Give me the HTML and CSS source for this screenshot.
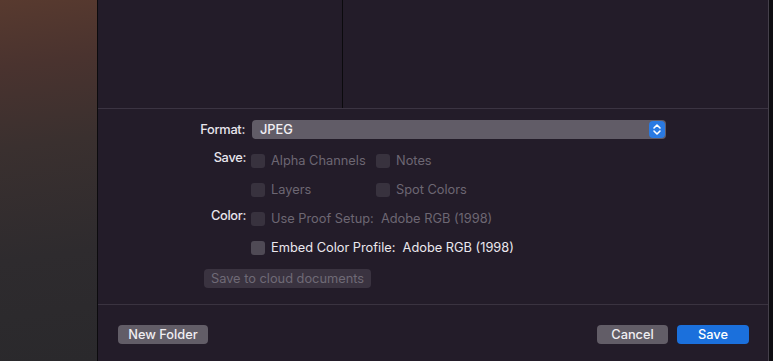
FILE: index.html
```html
<!DOCTYPE html>
<html>
<head>
<meta charset="utf-8">
<link rel="stylesheet" href="styles.css">
</head>
<body>
<div class="screen">
  <div class="desktop"></div>
  <div class="dialog">
    <div class="browser">
      <div class="col col-left"></div>
      <div class="col col-right"></div>
    </div>
    <div class="options">
      <div class="row row-format">
        <div class="label">Format:</div>
        <div class="popup">
          <span class="popup-text">JPEG</span>
          <span class="stepper">
            <svg width="16" height="17" viewBox="0 0 16 17"><path d="M5 7 L8 4 L11 7" fill="none" stroke="#fff" stroke-width="1.6" stroke-linecap="round" stroke-linejoin="round"/><path d="M5 10 L8 13 L11 10" fill="none" stroke="#fff" stroke-width="1.6" stroke-linecap="round" stroke-linejoin="round"/></svg>
          </span>
        </div>
      </div>
      <div class="row row-check">
        <div class="label">Save:</div>
        <div class="checks">
          <label class="check disabled"><span class="box"></span>Alpha Channels</label>
          <label class="check disabled"><span class="box"></span>Notes</label>
        </div>
      </div>
      <div class="row row-check">
        <div class="label"></div>
        <div class="checks">
          <label class="check disabled"><span class="box"></span>Layers</label>
          <label class="check disabled"><span class="box"></span>Spot Colors</label>
        </div>
      </div>
      <div class="row row-check">
        <div class="label">Color:</div>
        <div class="checks">
          <label class="check disabled wide"><span class="box"></span>Use Proof Setup:&nbsp; Adobe RGB (1998)</label>
        </div>
      </div>
      <div class="row row-check">
        <div class="label"></div>
        <div class="checks">
          <label class="check wide"><span class="box"></span>Embed Color Profile:&nbsp; Adobe RGB (1998)</label>
        </div>
      </div>
      <div class="cloud-row">
        <button class="btn btn-disabled">Save to cloud documents</button>
      </div>
    </div>
    <div class="footer">
      <button class="btn btn-gray">New Folder</button>
      <div class="spacer"></div>
      <button class="btn btn-gray btn-cancel">Cancel</button>
      <button class="btn btn-blue">Save</button>
    </div>
  </div>
  <div class="edge"></div>
</div>
</body>
</html>
```
FILE: styles.css
```css
* { box-sizing: border-box; }
html, body {
  margin: 0;
  padding: 0;
  width: 773px;
  height: 361px;
  overflow: hidden;
  background: #0d0c10;
  font-family: Inter, "Noto Sans", "Liberation Sans", sans-serif;
  font-size: 12.8px;
  color: #dedbe2;
}
.screen {
  display: flex;
  width: 773px;
  height: 361px;
}
.desktop {
  flex: none;
  width: 98px;
  background: linear-gradient(172deg, #583a2f 0%, #4a332f 18%, #3a302f 40%, #2e2b2e 70%, #2a292c 100%);
  border-right: 1px solid #0c0b0e;
}
.dialog {
  width: 671px;
  flex: none;
  background: #231c29;
  border-right: 1px solid #45404b;
  display: flex;
  flex-direction: column;
}
.edge {
  flex: 1;
  background: #0e0d11;
}
.browser {
  height: 109px;
  display: flex;
  border-bottom: 1px solid #3b3442;
}
.col-left {
  width: 245px;
  border-right: 1px solid #0b0a0d;
}
.col-right { flex: 1; }

.options {
  padding-top: 11px;
  height: 196px;
  border-bottom: 1px solid #3a3340;
}
.row {
  display: flex;
}
.label {
  width: 148px;
  text-align: right;
  color: #e8e5ec;
  font-weight: 500;
  letter-spacing: -0.3px;
  flex: none;
}
.row-format { height: 19px; align-items: center; margin-bottom: 7px; }
.row-format .label { padding-right: 1px; }
.popup {
  margin-left: 6px;
  width: 414px;
  height: 19px;
  background: #615c67;
  border-radius: 4px;
  display: flex;
  align-items: center;
  justify-content: space-between;
  padding-left: 8px;
  padding-right: 1px;
}
.popup-text { color: #f2f0f4; font-weight: 500; }
.stepper {
  width: 16px;
  height: 17px;
  border-radius: 4px;
  background: #2a7ae2;
  display: flex;
}
.row-check { height: 29px; align-items: center; }
.row-check .label { align-self: flex-start; padding-top: 4px; }
.checks {
  display: flex;
  margin-left: 5px;
}
.check {
  display: flex;
  align-items: center;
  width: 125px;
  color: #ebe8ee;
  white-space: nowrap;
}
.check.wide { width: auto; }
.check.disabled { color: #6d6773; }
.box {
  width: 14px;
  height: 14px;
  border-radius: 3px;
  background: #4f4a55;
  margin-right: 6px;
  flex: none;
}
.check.disabled .box { background: #38323e; }

.cloud-row {
  padding-left: 106px;
  padding-top: 7px;
}
.btn {
  font-family: inherit;
  font-size: 12.8px;
  border: none;
  border-radius: 4px;
  height: 19px;
  padding: 0 7px;
  line-height: 19px;
  margin: 0;
  white-space: nowrap;
}
.btn-disabled {
  background: #3a3340;
  color: #6f6a76;
  width: 167px;
  padding: 0;
  text-align: center;
}
.footer {
  display: flex;
  padding: 20px 19px 0 20px;
}
.spacer { flex: 1; }
.btn-gray {
  background: #625d67;
  color: #f0eef2;
  width: 90px;
  font-weight: 500;
}
.btn-cancel { width: 71px; margin-right: 9px; }
.btn-blue {
  background: #1b70dc;
  color: #ffffff;
  width: 72px;
  font-weight: 500;
}
```
